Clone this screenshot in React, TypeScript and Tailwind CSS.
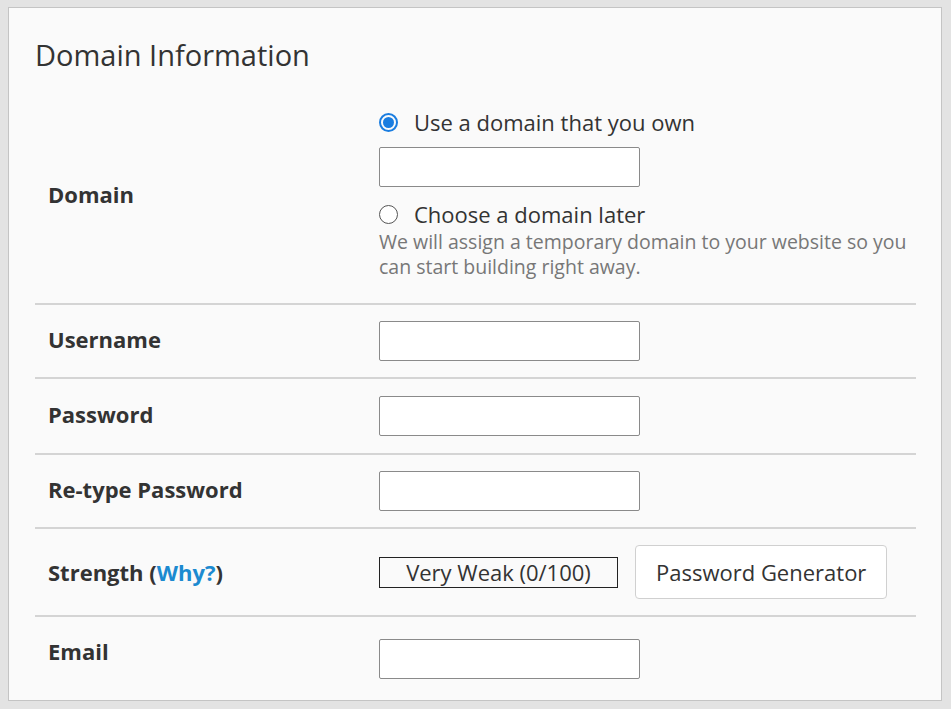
export default function App() {
  const input = 'w-[261px] h-[40px] border border-[#8a8a8a] rounded-[2px] bg-white';
  const label = 'text-[22px] font-bold text-[#333]';
  const divider = 'border-b-2 border-[#d4d4d4]';
  return (
    <div className="w-[951px] h-[709px] bg-[#e3e3e3] pt-[7px] pl-[8px] overflow-hidden" style={{ fontFamily: '"Open Sans", sans-serif' }}>
      <div className="w-[934px] h-[694px] bg-[#fafafa] border border-[#c4c4c4] pl-[26px] pr-[25px] overflow-hidden">
        <h1 className="text-[29px] text-[#333] mt-[28px] leading-[38px]">Domain Information</h1>

        <div className={`flex ${divider} h-[231px] pt-[33px]`}>
          <div className="w-[344px] pl-[13px] flex items-center pb-[22px]"><span className={label}>Domain</span></div>
          <div className="flex flex-col">
            <label className="flex items-center gap-[16px] h-[30px] text-[22px] text-[#333]">
              <span className="w-[19px] h-[19px] rounded-full border-2 border-[#1a7de0] flex items-center justify-center"><span className="w-[11px] h-[11px] rounded-full bg-[#1a7de0]" /></span>
              Use a domain that you own
            </label>
            <div className={`${input} mt-[10px]`} />
            <label className="flex items-center gap-[16px] h-[30px] mt-[12px] text-[22px] text-[#333]">
              <span className="w-[19px] h-[19px] rounded-full border border-[#555] bg-white" />
              Choose a domain later
            </label>
            <p className="text-[19.5px] leading-[25px] text-[#777] w-[530px]">We will assign a temporary domain to your website so you can start building right away.</p>
          </div>
        </div>

        {[['Username', 74], ['Password', 76], ['Re-type Password', 74]].map(([t, h]) => (
          <div key={t as string} className={`flex items-center ${divider}`} style={{ height: h as number }}>
            <div className="w-[344px] pl-[13px] pb-[3px]"><span className={label}>{t}</span></div>
            <div className={input} />
          </div>
        ))}

        <div className={`flex items-center ${divider} h-[88px]`}>
          <div className="w-[344px] pl-[13px]"><span className={label}>Strength (<span className="text-[#1c8ad0]">Why?</span>)</span></div>
          <div className="w-[239px] h-[31px] border border-[#222] flex items-center justify-center text-[22px] text-[#333]">Very Weak (0/100)</div>
          <button className="ml-[17px] h-[54px] px-[20px] bg-white border border-[#d0d0d0] rounded-[4px] text-[22px] text-[#333]">Password Generator</button>
        </div>

        <div className="flex items-center h-[80px] pb-[4px]">
          <div className="w-[344px] pl-[13px] pb-[8px]"><span className={label}>Email</span></div>
          <div className={`${input} mt-[8px]`} />
        </div>
      </div>
    </div>
  );
}
